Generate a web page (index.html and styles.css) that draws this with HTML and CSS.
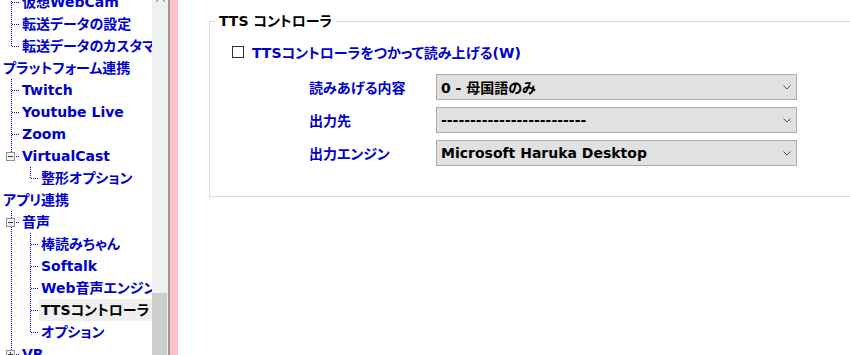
FILE: index.html
```html
<!DOCTYPE html>
<html lang="ja">
<head>
  <meta charset="UTF-8">
  <meta name="viewport" content="width=device-width, initial-scale=1.0">
  <title>TTS コントローラ</title>
  <link rel="stylesheet" href="styles.css">
</head>

<body>
  <div class="window">
    <!-- tree -->
    <div class="tree">
      <div class="row"><span class="cell t"></span><span class="text">仮想WebCam</span></div>
      <div class="row"><span class="cell t"></span><span class="text">転送データの設定</span></div>
      <div class="row"><span class="cell l"></span><span class="text">転送データのカスタマイズ</span></div>
      <div class="row"><span class="text">プラットフォーム連携</span></div>
      <div class="row"><span class="cell t"></span><span class="text">Twitch</span></div>
      <div class="row"><span class="cell t"></span><span class="text">Youtube Live</span></div>
      <div class="row"><span class="cell t"></span><span class="text">Zoom</span></div>
      <div class="row"><span class="cell l"><span class="box minus"></span></span><span class="text">VirtualCast</span></div>
      <div class="row"><span class="cell"></span><span class="cell l"></span><span class="text">整形オプション</span></div>
      <div class="row"><span class="text">アプリ連携</span></div>
      <div class="row"><span class="cell t"><span class="box minus"></span></span><span class="text">音声</span></div>
      <div class="row"><span class="cell v"></span><span class="cell t"></span><span class="text">棒読みちゃん</span></div>
      <div class="row"><span class="cell v"></span><span class="cell t"></span><span class="text">Softalk</span></div>
      <div class="row"><span class="cell v"></span><span class="cell t"></span><span class="text">Web音声エンジン</span></div>
      <div class="row"><span class="cell v"></span><span class="cell t"></span><span class="text selected">TTSコントローラ</span></div>
      <div class="row"><span class="cell v"></span><span class="cell l"></span><span class="text">オプション</span></div>
      <div class="row"><span class="cell t"><span class="box plus"></span></span><span class="text">VR</span></div>
    </div>

    <div class="scrollbar">
      <svg class="arrow" width="9" height="5" viewBox="0 0 9 5">
        <path d="M0.5 4.5 L4.5 0.5 L8.5 4.5" fill="none" stroke="#606060" stroke-width="1"/>
      </svg>
      <div class="track"></div>
      <div class="thumb"></div>
    </div>
    <div class="splitter"></div>
    <div class="accent"></div>

    <!-- settings -->
    <main class="pane">
      <fieldset class="group">
        <legend>TTS コントローラ</legend>
        <label class="check">
          <span class="checkbox"></span>
          <span>TTSコントローラをつかって読み上げる(W)</span>
        </label>
        <div class="fields">
          <div class="field">
            <span class="field-label">読みあげる内容</span>
            <div class="select"><span>0 - 母国語のみ</span><svg width="8" height="5" viewBox="0 0 8 5"><path d="M0.5 0.5 L4 4 L7.5 0.5" fill="none" stroke="#555" stroke-width="1"/></svg></div>
          </div>
          <div class="field">
            <span class="field-label">出力先</span>
            <div class="select"><span>-------------------------</span><svg width="8" height="5" viewBox="0 0 8 5"><path d="M0.5 0.5 L4 4 L7.5 0.5" fill="none" stroke="#555" stroke-width="1"/></svg></div>
          </div>
          <div class="field">
            <span class="field-label">出力エンジン</span>
            <div class="select"><span>Microsoft Haruka Desktop</span><svg width="8" height="5" viewBox="0 0 8 5"><path d="M0.5 0.5 L4 4 L7.5 0.5" fill="none" stroke="#555" stroke-width="1"/></svg></div>
          </div>
        </div>
      </fieldset>
    </main>
  </div>
</body>
</html>
```

FILE: styles.css
```css
* {
  margin: 0;
  padding: 0;
  box-sizing: border-box;
}

body {
  background: #fff;
  font-family: "DejaVu Sans", "Noto Sans CJK JP", sans-serif;
  font-size: 14px;
  font-weight: bold;
  font-feature-settings: "palt";
  overflow: hidden;
}

.window {
  display: flex;
  height: 355px;
  overflow: hidden;
}

/* tree */
.tree {
  width: 152px;
  flex: none;
  padding-left: 3px;
  margin-top: -9px;
  overflow: hidden;
  color: #0000cd;
}

.row {
  display: flex;
  align-items: center;
  height: 22px;
  white-space: nowrap;
}

.cell {
  flex: none;
  display: flex;
  align-items: center;
  width: 19px;
  height: 22px;
  padding-left: 3px;
  background-repeat: no-repeat;
}

.cell.v {
  background-image: repeating-linear-gradient(to bottom, #0000e0 0 1px, transparent 1px 2px);
  background-size: 1px 22px;
  background-position: 8px 0;
}

.cell.t {
  background-image:
    repeating-linear-gradient(to bottom, #0000e0 0 1px, transparent 1px 2px),
    repeating-linear-gradient(to right, #0000e0 0 1px, transparent 1px 2px);
  background-size: 1px 22px, 8px 1px;
  background-position: 8px 0, 9px 11px;
}

.cell.l {
  background-image:
    repeating-linear-gradient(to bottom, #0000e0 0 1px, transparent 1px 2px),
    repeating-linear-gradient(to right, #0000e0 0 1px, transparent 1px 2px);
  background-size: 1px 11px, 8px 1px;
  background-position: 8px 0, 9px 11px;
}

.box {
  width: 9px;
  height: 9px;
  border: 1px solid #919191;
  background: linear-gradient(#404040, #404040) center / 5px 1px no-repeat, #f2f2f2;
}

.box.plus {
  background:
    linear-gradient(#404040, #404040) center / 5px 1px no-repeat,
    linear-gradient(#404040, #404040) center / 1px 5px no-repeat,
    #f2f2f2;
}

.text {
  line-height: 22px;
  margin-left: -2px;
  padding: 0 4px 0 2px;
}

.text.selected {
  background: #efefef;
  color: #000;
}

/* scrollbar + splitter */
.scrollbar {
  width: 16px;
  flex: none;
  display: flex;
  flex-direction: column;
  background: #f0f0f0;
}

.arrow {
  margin: -3px 0 0 4px;
  flex: none;
}

.track {
  flex: 1;
}

.thumb {
  height: 62px;
  width: 15px;
  background: #cdcdcd;
}

.splitter {
  width: 2px;
  flex: none;
  background: #9a9a9a;
}

.accent {
  width: 8px;
  flex: none;
  background: #ffc0cb;
}

/* settings pane */
.pane {
  flex: 1;
  min-width: 0;
  padding: 13px 0 0 31px;
  overflow: hidden;
}

.group {
  border: 1px solid #dcdcdc;
  margin-right: -20px;
  padding: 0 0 30px;
  min-width: 0;
}

.group legend {
  margin-left: 5px;
  padding: 0 4px;
  line-height: 16px;
  color: #000;
}

.check {
  display: flex;
  align-items: center;
  gap: 8px;
  height: 22px;
  margin: 12px 0 0 22px;
  color: #0000cd;
}

.checkbox {
  width: 12px;
  height: 12px;
  border: 1px solid #333;
}

.fields {
  display: flex;
  flex-direction: column;
  gap: 7px;
  margin-top: 11px;
}

.field {
  display: flex;
  align-items: center;
  height: 26px;
}

.field-label {
  width: 127px;
  margin-left: 99px;
  color: #0000cd;
}

.select {
  width: 361px;
  height: 26px;
  display: flex;
  align-items: center;
  justify-content: space-between;
  padding: 0 5px 0 4px;
  background: #e1e1e1;
  border: 1px solid #adadad;
  color: #000;
  white-space: nowrap;
}
```
